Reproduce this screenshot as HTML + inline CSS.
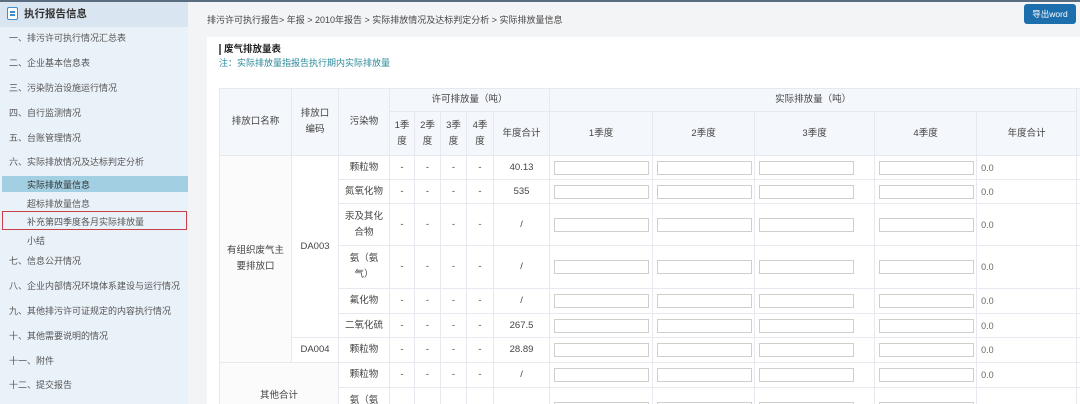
<!DOCTYPE html>
<html><head><meta charset="utf-8"><style>
*{margin:0;padding:0;box-sizing:border-box}
html,body{width:1080px;height:404px;overflow:hidden}
body{background:#f3f4f6;font-family:"Liberation Sans","Noto Sans CJK SC",sans-serif;font-size:10px;color:#444;position:relative}
.wrap{position:absolute;left:0;top:0;width:1080px;height:404px;overflow:hidden}
.topline{position:absolute;left:0;top:0;width:1080px;height:2px;background:#5a6d80}
.side{position:absolute;left:0;top:2px;width:188px;height:402px;background:#eaf2f9}
.sh{height:25px;background:#d9e6f1;font-size:10.5px;color:#333;padding:4px 0 0 24px;position:relative;font-weight:bold}
.sh i{position:absolute;left:7px;top:5px;width:11px;height:13px;border:1.5px solid #3b8ed0;border-radius:2px;background:#fff}
.sh i:before{content:"";position:absolute;left:2px;top:3px;width:5px;height:1.5px;background:#3b8ed0;box-shadow:0 3px 0 #3b8ed0}
.it{position:absolute;left:9px;color:#555;font-size:9px}
.sub{position:absolute;left:27px;color:#555;font-size:9px}
.hl{position:absolute;left:2px;top:176px;width:186px;height:16px;background:#a2cfe2}
.red{position:absolute;left:2px;top:211px;width:185px;height:19px;border:1.5px solid #c9404a}
.crumb{position:absolute;left:207px;top:13px;font-size:9px;color:#444}
.btn{position:absolute;left:1024px;top:4px;width:52px;height:20px;background:#1d6ead;border-radius:3px;color:#fff;font-size:8.5px;text-align:center;line-height:20px}
.panel{position:absolute;left:207px;top:37px;width:873px;height:367px;background:#fff}
.title{position:absolute;left:219px;top:44px;font-size:9.5px;font-weight:bold;color:#222;border-left:2px solid #666;padding-left:3px;line-height:11px}
.note{position:absolute;left:219px;top:56px;font-size:9px;color:#2a8a9a}
table{position:absolute;left:219px;top:88px;width:877px;border-collapse:collapse;table-layout:fixed;font-size:9.5px;color:#444}
td{border:1px solid #e6e9ef;text-align:center;vertical-align:middle;padding:0;line-height:16px;overflow:hidden}
thead td{background:#f4f7fb}
.in{display:block;margin-left:4px;width:95px;height:14px;border:1px solid #cfcfcf;background:#fff}
.z{text-align:left;padding-left:4px;font-size:9px;color:#666}
.g{background:#fbfbfc}
</style></head><body><div class="wrap">
<div class="topline"></div>
<div class="side">
<div class="sh"><i></i>执行报告信息</div>
</div>
<div class="hl"></div>
<div class="red"></div>
<div class="it" style="top:31px">一、排污许可执行情况汇总表</div>
<div class="it" style="top:56px">二、企业基本信息表</div>
<div class="it" style="top:81px">三、污染防治设施运行情况</div>
<div class="it" style="top:106px">四、自行监测情况</div>
<div class="it" style="top:131px">五、台账管理情况</div>
<div class="it" style="top:155px">六、实际排放情况及达标判定分析</div>
<div class="sub" style="top:178px;color:#333">实际排放量信息</div>
<div class="sub" style="top:197px">超标排放量信息</div>
<div class="sub" style="top:215px">补充第四季度各月实际排放量</div>
<div class="sub" style="top:234px">小结</div>
<div class="it" style="top:254px">七、信息公开情况</div>
<div class="it" style="top:279px">八、企业内部情况环境体系建设与运行情况</div>
<div class="it" style="top:304px">九、其他排污许可证规定的内容执行情况</div>
<div class="it" style="top:329px">十、其他需要说明的情况</div>
<div class="it" style="top:354px">十一、附件</div>
<div class="it" style="top:378px">十二、提交报告</div>
<div class="crumb">排污许可执行报告&gt; 年报 &gt; 2010年报告 &gt; 实际排放情况及达标判定分析 &gt; 实际排放量信息</div>
<div class="btn">导出word</div>
<div class="panel"></div>
<div class="title">废气排放量表</div>
<div class="note">注：实际排放量指报告执行期内实际排放量</div>
<table>
<colgroup><col style="width:72px"><col style="width:47px"><col style="width:51px"><col style="width:25px"><col style="width:26px"><col style="width:26px"><col style="width:27px"><col style="width:56px"><col style="width:103px"><col style="width:102px"><col style="width:120px"><col style="width:102px"><col style="width:100px"><col style="width:20px"></colgroup>
<thead>
<tr style="height:23px"><td rowspan="2">排放口名称</td><td rowspan="2">排放口<br>编码</td><td rowspan="2">污染物</td><td colspan="5">许可排放量（吨）</td><td colspan="5">实际排放量（吨）</td><td rowspan="2"></td></tr>
<tr style="height:44px"><td>1季<br>度</td><td>2季<br>度</td><td>3季<br>度</td><td>4季<br>度</td><td>年度合计</td><td>1季度</td><td>2季度</td><td>3季度</td><td>4季度</td><td>年度合计</td></tr>
</thead>
<tbody>
<tr style="height:24px"><td rowspan="7" class="g">有组织废气主<br>要排放口</td><td rowspan="6">DA003</td><td>颗粒物</td><td>-</td><td>-</td><td>-</td><td>-</td><td>40.13</td><td><i class="in"></i></td><td><i class="in"></i></td><td><i class="in"></i></td><td><i class="in"></i></td><td class="z">0.0</td><td></td></tr>
<tr style="height:24px"><td>氮氧化物</td><td>-</td><td>-</td><td>-</td><td>-</td><td>535</td><td><i class="in"></i></td><td><i class="in"></i></td><td><i class="in"></i></td><td><i class="in"></i></td><td class="z">0.0</td><td></td></tr>
<tr style="height:42px"><td>汞及其化<br>合物</td><td>-</td><td>-</td><td>-</td><td>-</td><td>/</td><td><i class="in"></i></td><td><i class="in"></i></td><td><i class="in"></i></td><td><i class="in"></i></td><td class="z">0.0</td><td></td></tr>
<tr style="height:43px"><td>氨（氨<br>气）</td><td>-</td><td>-</td><td>-</td><td>-</td><td>/</td><td><i class="in"></i></td><td><i class="in"></i></td><td><i class="in"></i></td><td><i class="in"></i></td><td class="z">0.0</td><td></td></tr>
<tr style="height:25px"><td>氟化物</td><td>-</td><td>-</td><td>-</td><td>-</td><td>/</td><td><i class="in"></i></td><td><i class="in"></i></td><td><i class="in"></i></td><td><i class="in"></i></td><td class="z">0.0</td><td></td></tr>
<tr style="height:24px"><td>二氧化硫</td><td>-</td><td>-</td><td>-</td><td>-</td><td>267.5</td><td><i class="in"></i></td><td><i class="in"></i></td><td><i class="in"></i></td><td><i class="in"></i></td><td class="z">0.0</td><td></td></tr>
<tr style="height:25px"><td>DA004</td><td>颗粒物</td><td>-</td><td>-</td><td>-</td><td>-</td><td>28.89</td><td><i class="in"></i></td><td><i class="in"></i></td><td><i class="in"></i></td><td><i class="in"></i></td><td class="z">0.0</td><td></td></tr>
<tr style="height:25px"><td rowspan="2" colspan="2" class="g">其他合计</td><td>颗粒物</td><td>-</td><td>-</td><td>-</td><td>-</td><td>/</td><td><i class="in"></i></td><td><i class="in"></i></td><td><i class="in"></i></td><td><i class="in"></i></td><td class="z">0.0</td><td></td></tr>
<tr style="height:42px"><td>氨（氨<br>气）</td><td>-</td><td>-</td><td>-</td><td>-</td><td>/</td><td><i class="in"></i></td><td><i class="in"></i></td><td><i class="in"></i></td><td><i class="in"></i></td><td class="z"></td><td></td></tr>
</tbody></table>
</div></body></html>
